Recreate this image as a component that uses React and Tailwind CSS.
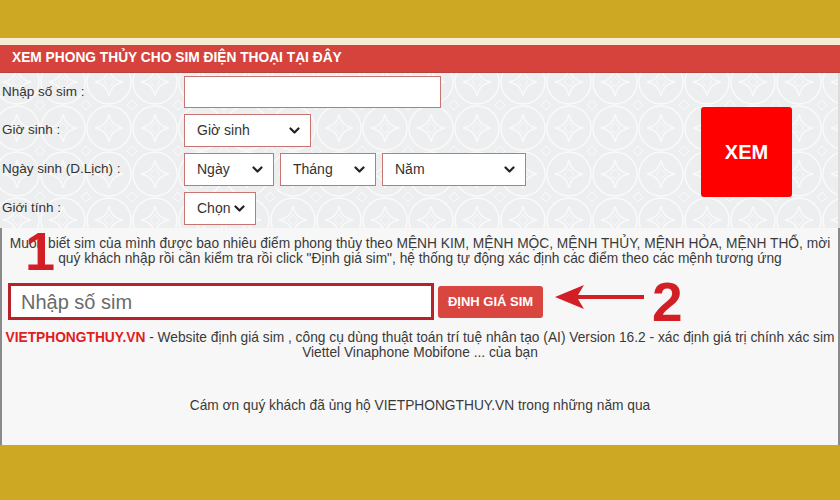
import React from "react";

function Chevron() {
  return (
    <svg width="11" height="8" viewBox="0 0 11 8" className="shrink-0">
      <path d="M1.5 1.5 L5.5 5.5 L9.5 1.5" fill="none" stroke="#222" strokeWidth="2.2" strokeLinecap="round" strokeLinejoin="round" />
    </svg>
  );
}

function FakeSelect({ label, className }) {
  return (
    <div className={`flex items-center justify-between h-[33px] border border-[#c87572] bg-white pl-3 pr-[10px] text-[14px] text-[#333] ${className}`}>
      <span>{label}</span>
      <Chevron />
    </div>
  );
}

function Row({ label, children }) {
  return (
    <div className="flex items-center">
      <div className="w-[184px] pl-[2px] text-[13.5px] text-[#333]">{label}</div>
      <div className="flex gap-[6px]">{children}</div>
    </div>
  );
}

// decorative coin pattern behind the form
function CoinPattern() {
  return (
    <svg className="absolute inset-0 h-full w-full" aria-hidden="true">
      <defs>
        <pattern id="coins" width="46" height="46" patternUnits="userSpaceOnUse" x="-6" y="-14">
          <circle cx="23" cy="23" r="22" fill="none" stroke="#fafafa" strokeWidth="1.4" />
          <path d="M23 9 Q25 21 37 23 Q25 25 23 37 Q21 25 9 23 Q21 21 23 9 Z" fill="none" stroke="#fafafa" strokeWidth="1.4" />
          <path d="M23 18 L28 23 L23 28 L18 23 Z" fill="none" stroke="#f7f7f7" strokeWidth="1" />
          <path d="M0 -5 L5 0 L0 5 L-5 0 Z M46 -5 L51 0 L46 5 L41 0 Z M0 41 L5 46 L0 51 L-5 46 Z M46 41 L51 46 L46 51 L41 46 Z" fill="none" stroke="#fafafa" strokeWidth="1" />
        </pattern>
      </defs>
      <rect width="100%" height="100%" fill="url(#coins)" />
    </svg>
  );
}

export default function App() {
  return (
    <div className="relative w-[840px] h-[500px] overflow-hidden bg-[#f7f7f7] [font-family:'Liberation_Sans',Arial,sans-serif]">
      <div className="h-[38px] bg-[#cca823]" />
      <div className="h-[7px] bg-[#f5ecd3]" />

      <div className="h-[28px] bg-[#d5433c] border-b border-[#b3453f] flex items-center pl-[12px] text-[13.75px] font-bold text-white">
        XEM PHONG THỦY CHO SIM ĐIỆN THOẠI TẠI ĐÂY
      </div>

      {/* form block */}
      <div className="relative h-[155px] bg-[#edeeef] border-r-2 border-[#dcdcdc]">
        <CoinPattern />
        <div className="relative flex h-full items-center justify-between pr-[46px]">
          <div className="flex flex-col gap-[6px]">
            <Row label="Nhập số sim :">
              <div className="h-[32px] w-[257px] border border-[#c87572] bg-white" />
            </Row>
            <Row label="Giờ sinh :">
              <FakeSelect label="Giờ sinh" className="w-[127px]" />
            </Row>
            <Row label="Ngày sinh (D.Lịch) :">
              <FakeSelect label="Ngày" className="w-[90px]" />
              <FakeSelect label="Tháng" className="w-[96px]" />
              <FakeSelect label="Năm" className="w-[144px]" />
            </Row>
            <Row label="Giới tính :">
              <FakeSelect label="Chọn" className="w-[72px]" />
            </Row>
          </div>
          <button className="mt-[3px] flex h-[90px] w-[91px] items-center justify-center rounded-[3px] bg-[#fe0000] text-[20px] font-bold text-white">
            XEM
          </button>
        </div>
      </div>

      {/* lower block */}
      <div className="relative h-[217px] border-x-2 border-[#8a8a8a] bg-[#f7f7f7]">
        <p className="pt-[8px] text-center text-[13.75px] leading-[15px] text-[#3a3a3a]">
          Muốn biết sim của mình được bao nhiêu điểm phong thủy theo MỆNH KIM, MỆNH MỘC, MỆNH THỦY, MỆNH HỎA, MỆNH THỔ, mời
          <br />
          quý khách nhập rồi cần kiểm tra rồi click "Định giá sim", hệ thống tự động xác định các điểm theo các mệnh tương ứng
        </p>

        <div className="mt-[17px] flex items-center pl-[6px]">
          <div className="flex h-[37px] w-[426px] items-center border-[3px] border-[#b8232b] bg-white pl-[10px] text-[20px] text-[#6b6b6b]">
            Nhập số sim
          </div>
          <button className="ml-[4px] h-[32px] w-[105px] rounded-[3px] bg-[#d9463f] text-[13px] font-bold text-white">
            ĐỊNH GIÁ SIM
          </button>
        </div>

        <p className="mt-[10px] text-center text-[13.75px] leading-[15px] text-[#3a3a3a]">
          <span className="font-bold text-[#e0201e]">VIETPHONGTHUY.VN</span> - Website định giá sim , công cụ dùng thuật toán trí tuệ nhân tạo (AI) Version 16.2 - xác định giá trị chính xác sim
          <br />
          Viettel Vinaphone Mobifone ... của bạn
        </p>

        <p className="mt-[38px] text-center text-[13.75px] leading-[15px] text-[#3a3a3a]">
          Cám ơn quý khách đã ủng hộ VIETPHONGTHUY.VN trong những năm qua
        </p>

        {/* step markers */}
        <div className="absolute left-[23px] top-[-4px] text-[54px] font-bold leading-none text-[#d21f26]">1</div>
        <svg className="absolute left-[550px] top-[54px]" width="94" height="30" viewBox="0 0 94 30">
          <path d="M3 15 L32 3 L26 13 L92 13 L92 17 L26 17 L32 27 Z" fill="#d21f26" />
        </svg>
        <div className="absolute left-[650px] top-[47px] text-[55px] font-bold leading-none text-[#d21f26]">2</div>
      </div>

      <div className="h-[55px] bg-[#cca823]" />
    </div>
  );
}
